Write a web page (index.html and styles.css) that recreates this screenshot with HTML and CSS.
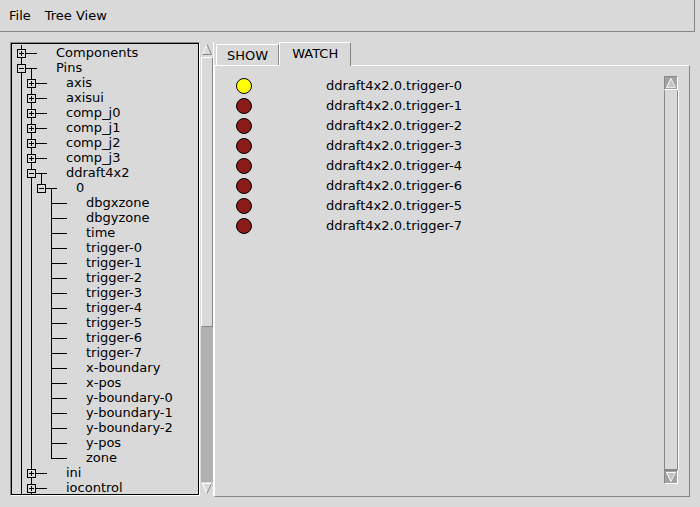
FILE: index.html
```html
<!DOCTYPE html>
<html lang="en">
<head>
    <meta charset="UTF-8">
    <title>HAL Show</title>
    <link rel="stylesheet" href="styles.css">
</head>
<body>
    <div class="menubar">
        <span class="menu">File</span>
        <span class="menu">Tree View</span>
    </div>

    <div class="main">
        <div class="tree">
            <div class="tree-inner" id="tree"></div>
        </div>

        <div class="scroll tree-scroll">
            <div class="arrow">
                <svg width="12" height="15"><path d="M1.5 12.5 L6 2.5" stroke="#fff" fill="none"/><path d="M6 2.5 L10.5 12.5 H1.5" stroke="#888" fill="none"/></svg>
            </div>
            <div class="thumb"></div>
            <div class="trough"></div>
            <div class="arrow">
                <svg width="12" height="14"><path d="M6 11.5 L1.5 1.5 H10.5" stroke="#fff" fill="none"/><path d="M10.5 1.5 L6 11.5" stroke="#888" fill="none"/></svg>
            </div>
        </div>

        <div class="notebook">
            <div class="tabs">
                <div class="tab">SHOW</div>
                <div class="tab selected">WATCH</div>
            </div>
            <div class="pane">
                <div class="watch">
                    <div class="watch-row"><span class="led on"></span><span>ddraft4x2.0.trigger-0</span></div>
                    <div class="watch-row"><span class="led"></span><span>ddraft4x2.0.trigger-1</span></div>
                    <div class="watch-row"><span class="led"></span><span>ddraft4x2.0.trigger-2</span></div>
                    <div class="watch-row"><span class="led"></span><span>ddraft4x2.0.trigger-3</span></div>
                    <div class="watch-row"><span class="led"></span><span>ddraft4x2.0.trigger-4</span></div>
                    <div class="watch-row"><span class="led"></span><span>ddraft4x2.0.trigger-6</span></div>
                    <div class="watch-row"><span class="led"></span><span>ddraft4x2.0.trigger-5</span></div>
                    <div class="watch-row"><span class="led"></span><span>ddraft4x2.0.trigger-7</span></div>
                </div>
                <div class="scroll pane-scroll">
                    <div class="arrow dark">
                        <svg width="14" height="14"><path d="M2.5 11.5 L7 2.5 L11.5 11.5 Z" fill="#c4c4c4"/><path d="M2.5 11.5 L7 2.5" stroke="#fff" fill="none"/><path d="M7 2.5 L11.5 11.5 H2.5" stroke="#fff" fill="none" opacity="0.7"/></svg>
                    </div>
                    <div class="thumb full"></div>
                    <div class="arrow dark">
                        <svg width="14" height="14"><path d="M2.5 2.5 L7 11.5 L11.5 2.5 Z" fill="#c4c4c4"/><path d="M7 11.5 L2.5 2.5 H11.5" stroke="#fff" fill="none"/><path d="M11.5 2.5 L7 11.5" stroke="#fff" fill="none" opacity="0.7"/></svg>
                    </div>
                </div>
            </div>
        </div>
    </div>

    <script>
        // level, label, state ('open' | 'closed' | '' for a pin), scrolled out of view
        const items = [
            [0, 'Components', 'closed'],
            [0, 'Pins', 'open'],
            [1, 'axis', 'closed'],
            [1, 'axisui', 'closed'],
            [1, 'comp_j0', 'closed'],
            [1, 'comp_j1', 'closed'],
            [1, 'comp_j2', 'closed'],
            [1, 'comp_j3', 'closed'],
            [1, 'ddraft4x2', 'open'],
            [2, '0', 'open'],
            [3, 'dbgxzone', ''],
            [3, 'dbgyzone', ''],
            [3, 'time', ''],
            [3, 'trigger-0', ''],
            [3, 'trigger-1', ''],
            [3, 'trigger-2', ''],
            [3, 'trigger-3', ''],
            [3, 'trigger-4', ''],
            [3, 'trigger-5', ''],
            [3, 'trigger-6', ''],
            [3, 'trigger-7', ''],
            [3, 'x-boundary', ''],
            [3, 'x-pos', ''],
            [3, 'y-boundary-0', ''],
            [3, 'y-boundary-1', ''],
            [3, 'y-boundary-2', ''],
            [3, 'y-pos', ''],
            [3, 'zone', ''],
            [1, 'ini', 'closed'],
            [1, 'iocontrol', 'closed'],
            [1, 'joint', 'closed', true],
            [0, 'Signals', 'closed', true]
        ];

        const tree = document.getElementById('tree');

        function hasNext(i) {
            const level = items[i][0];
            for (let j = i + 1; j < items.length; j++) {
                if (items[j][0] < level) return false;
                if (items[j][0] === level) return true;
            }
            return false;
        }

        const col = k => 9.5 + 10 * k;
        const stack = [];

        items.forEach(([level, label, state, hidden], i) => {
            stack[level] = i;
            if (hidden) return;
            const width = 44 + 10 * level;
            let d = '';

            for (let k = 0; k < level; k++) {
                if (hasNext(stack[k])) d += `M${col(k)} 0V15`;
            }
            const c = col(level);
            d += hasNext(i) ? `M${c} 0V15` : `M${c} 0V8.5`;
            d += `M${c} 8.5H${c + 15}`;
            if (state === 'open') d += `M${col(level + 1)} 8.5V15`;

            let box = '';
            if (state) {
                box = `<rect x="${c - 4}" y="4.5" width="8" height="8" fill="#d9d9d9" stroke="#000"/>`;
                let sign = `M${c - 2.5} 8.5H${c + 2.5}`;
                if (state === 'closed') sign += `M${c} 6V11`;
                box += `<path d="${sign}" stroke="#000"/>`;
            }

            const row = document.createElement('div');
            row.className = 'row';
            row.innerHTML =
                `<svg width="${width}" height="15" shape-rendering="crispEdges">` +
                `<path d="${d}" stroke="#000" fill="none"/>${box}</svg>` +
                `<span>${label}</span>`;
            tree.appendChild(row);
        });
    </script>
</body>
</html>
```

FILE: styles.css
```css
body {
    margin: 0;
    width: 700px;
    height: 507px;
    overflow: hidden;
    background-color: #d9d9d9;
    font-family: "DejaVu Sans", sans-serif;
    font-size: 13px;
    color: #000;
}
.menubar {
    display: flex;
    box-sizing: border-box;
    width: 695px;
    height: 32px;
    line-height: 31px;
    padding-left: 2px;
    border-right: 1px solid #888;
    border-bottom: 1px solid #888;
}
.menu {
    padding: 0 7px;
}
.main {
    display: flex;
    padding: 10px 0 0 10px;
}
.tree {
    width: 190px;
    height: 454px;
    box-sizing: border-box;
    border: 1px solid;
    border-color: #888 #fff #fff #888;
}
.tree-inner {
    height: 100%;
    box-sizing: border-box;
    border: 1px solid #000;
    padding-top: 1px;
    overflow: hidden;
}
.row {
    display: flex;
    height: 15px;
    line-height: 15px;
    white-space: nowrap;
}
.row svg {
    display: block;
    flex: none;
}
.scroll {
    display: flex;
    flex-direction: column;
    box-sizing: border-box;
    width: 14px;
}
.scroll svg {
    display: block;
}
.tree-scroll {
    height: 454px;
    border-left: 1px solid #d9d9d9;
    border-right: 1px solid #fff;
}
.tree-scroll .arrow {
    flex: none;
}
.thumb {
    flex: none;
    height: 270px;
    box-sizing: border-box;
    border: 1px solid;
    border-color: #fff #888 #888 #fff;
    background-color: #d9d9d9;
}
.trough {
    flex: 1;
    background-color: #b0b0b0;
}
.notebook {
    display: flex;
    flex-direction: column;
    width: 476px;
    height: 455px;
}
.tabs {
    display: flex;
    align-items: flex-end;
    height: 23px;
    padding-left: 2px;
    flex: none;
}
.tab {
    border: 1px solid;
    border-color: #fff #888 transparent #fff;
    border-bottom: none;
    padding: 2px 10px 0;
    line-height: 18px;
}
.tab.selected {
    position: relative;
    z-index: 1;
    padding: 2px 12px 3px 12px;
    margin-bottom: -1px;
    background-color: #d9d9d9;
}
.pane {
    flex: 1;
    display: flex;
    border: 1px solid;
    border-color: #fff #888 #888 #fff;
    padding: 9px 11px 12px 0;
}
.watch {
    flex: 1;
    padding: 1px 0 0 21px;
}
.watch-row {
    display: flex;
    align-items: center;
    height: 20px;
    line-height: 20px;
    white-space: nowrap;
}
.led {
    width: 16px;
    height: 16px;
    box-sizing: border-box;
    border: 1px solid #000;
    border-radius: 50%;
    background-color: #8b1a1a;
    margin-right: 74px;
}
.led.on {
    background-color: #ffff00;
}
.pane-scroll {
    margin-top: 1px;
}
.arrow.dark {
    flex: none;
    height: 14px;
    box-sizing: border-box;
    background-color: #a3a3a3;
    border: 1px solid;
    border-color: #888 #fff #fff #888;
}
.arrow.dark svg {
    margin: -1px;
}
.thumb.full {
    flex: 1;
    height: auto;
    border-color: #d9d9d9 #888 #888 #888;
    border-right: 1px solid #888;
    box-shadow: 1px 0 0 #fff;
}
```
